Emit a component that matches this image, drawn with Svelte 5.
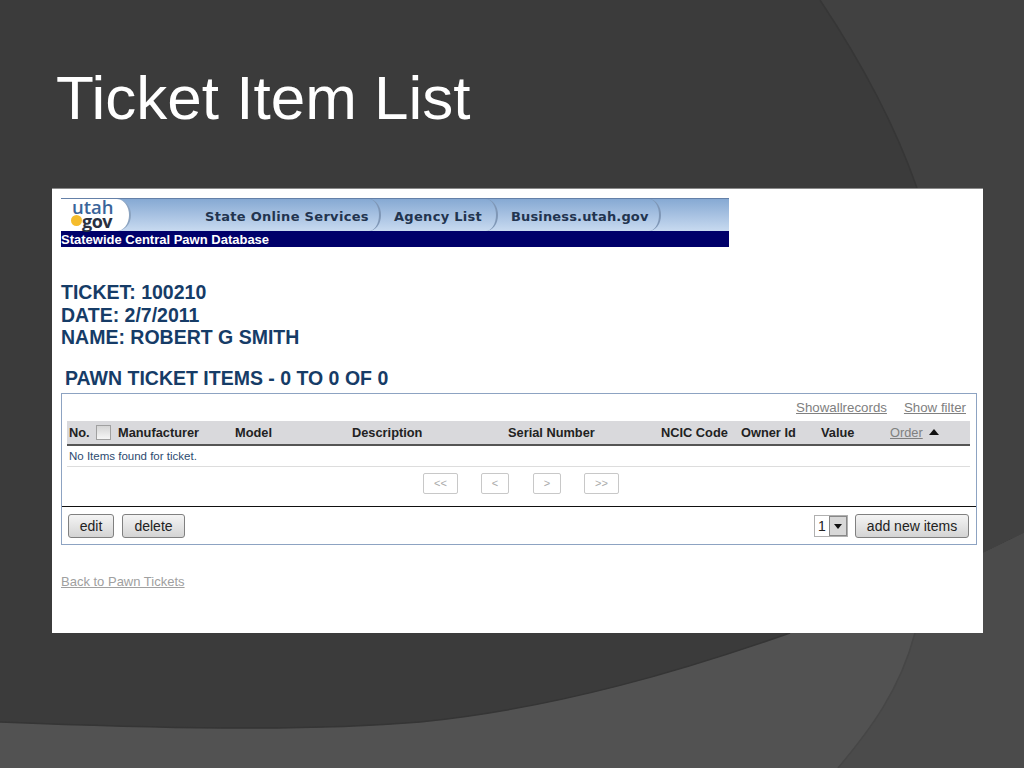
<script>
  const cols = [
    { label: 'Manufacturer', w: 117 },
    { label: 'Model', w: 117 },
    { label: 'Description', w: 156 },
    { label: 'Serial Number', w: 153 },
    { label: 'NCIC Code', w: 80 },
    { label: 'Owner Id', w: 80 },
    { label: 'Value', w: 69 }
  ];
  const pager = [
    { t: '<<', w: 35, gap: 23 },
    { t: '<', w: 28, gap: 24 },
    { t: '>', w: 28, gap: 23 },
    { t: '>>', w: 35, gap: 0 }
  ];
</script>

<div class="page">
  <svg class="bg" width="1024" height="768" viewBox="0 0 1024 768" aria-hidden="true">
    <rect width="1024" height="768" fill="#3b3b3b" />
    <path d="M820 0 C860 60 895 125 917 188 C940 260 965 400 983 553 L1024 533 L1024 0 Z" fill="#414141" />
    <path d="M820 0 C860 60 895 125 917 188" fill="none" stroke="#363636" stroke-width="1.5" />
    <path d="M0 722 C150 728 300 732 420 722 C560 708 690 668 790 633 L983 553 L1024 533 L1024 768 L0 768 Z" fill="#525252" />
    <path d="M915 633 C900 690 870 730 838 768 L1024 768 L1024 533 L983 553 Z" fill="#4b4b4b" />
    <path d="M915 633 C900 690 870 730 838 768" fill="none" stroke="#464646" stroke-width="1.5" />
    <path d="M0 722 C150 728 300 732 420 722 C560 708 690 668 790 633" fill="none" stroke="#353535" stroke-width="1.5" />
  </svg>

  <h1>Ticket Item List</h1>

  <main class="card">
    <div class="banner">
      <div class="nav">
        <div class="logo">
          <span class="dot"></span>
          <span class="utah">utah</span>
          <span class="gov">gov</span>
        </div>
        <div class="tab first">State Online Services</div>
        <div class="tab second">Agency List</div>
        <div class="tab third">Business.utah.gov</div>
      </div>
      <div class="strip">Statewide Central Pawn Database</div>
    </div>

    <div class="meta">
      <div>TICKET: 100210</div>
      <div>DATE: 2/7/2011</div>
      <div>NAME: ROBERT G SMITH</div>
    </div>

    <h2>PAWN TICKET ITEMS - 0 TO 0 OF 0</h2>

    <section class="panel">
      <div class="links">
        <a href="#top">Showallrecords</a>
        <a href="#top">Show filter</a>
      </div>
      <div class="head">
        <span class="no">No.</span>
        <span class="check"></span>
        {#each cols as c}
          <span class="col" style="width:{c.w}px">{c.label}</span>
        {/each}
        <a class="order" href="#top">Order</a>
        <span class="tri"></span>
      </div>
      <div class="empty">No Items found for ticket.</div>
      <div class="pager">
        {#each pager as p}
          <span class="pg" style="width:{p.w}px;margin-right:{p.gap}px">{p.t}</span>
        {/each}
      </div>
      <div class="actions">
        <button>edit</button>
        <button class="del">delete</button>
        <span class="grow"></span>
        <span class="select"><span class="val">1</span><span class="arrow"></span></span>
        <button class="add">add new items</button>
      </div>
    </section>

    <a class="back" href="#top">Back to Pawn Tickets</a>
  </main>
</div>

<style>
  :global(body) { margin: 0; background: #3b3b3b; }
  .page {
    position: relative;
    width: 1024px;
    height: 768px;
    overflow: hidden;
    font-family: "Liberation Sans", Arial, sans-serif;
  }
  .bg { position: absolute; inset: 0; }
  h1 {
    position: relative;
    margin: 0;
    height: 188px;
    box-sizing: border-box;
    padding: 62px 0 0 56px;
    font-size: 62px;
    line-height: 72px;
    font-weight: 400;
    color: #fff;
  }
  .card {
    position: relative;
    width: 931px;
    height: 445px;
    margin-left: 52px;
    box-sizing: border-box;
    padding: 9px 6px 0 9px;
    background: #fff;
    border-top: 1px solid #8a8a8a;
  }
  .banner { width: 668px; }
  .nav {
    display: flex;
    height: 33px;
    background: linear-gradient(#86a9d3, #c8daf0);
    border-top: 1px solid #6480a8;
    box-sizing: border-box;
  }
  .logo {
    position: relative;
    flex: none;
    width: 70px;
    background: #fff;
    border-right: 2px solid #8ba3c0;
    border-radius: 0 14px 14px 0 / 0 50% 50% 0;
    box-sizing: border-box;
  }
  .utah, .gov {
    position: absolute;
    font-family: "Open Sans", sans-serif;
    line-height: 14px;
  }
  .utah { left: 11px; top: 1px; font-size: 18.5px; font-weight: 600; color: #3a6499; }
  .gov { left: 21px; top: 15px; font-size: 18px; font-weight: 700; color: #2a3140; letter-spacing: -0.5px; }
  .dot {
    position: absolute;
    left: 10px;
    top: 16px;
    width: 11px;
    height: 11px;
    border-radius: 50%;
    background: #f5bc2c;
  }
  .tab {
    display: flex;
    flex: none;
    align-items: center;
    box-sizing: border-box;
    padding-top: 2px;
    font-family: "DejaVu Sans", sans-serif;
    font-weight: 700;
    font-size: 13px;
    letter-spacing: 0.3px;
    color: #22344f;
    border-right: 2px solid #7f97b6;
    border-radius: 0 12px 12px 0 / 0 50% 50% 0;
    white-space: nowrap;
  }
  .tab.first { width: 250px; padding-left: 74px; }
  .tab.second { width: 117px; padding-left: 13px; }
  .tab.third { width: 163px; padding-left: 13px; letter-spacing: 0.15px; }
  .strip {
    height: 16px;
    background: #00006a;
    color: #fff;
    font-size: 13px;
    font-weight: 700;
    line-height: 17px;
  }
  .meta {
    margin-top: 34px;
    font-size: 19.5px;
    line-height: 22.5px;
    font-weight: 700;
    color: #163c67;
  }
  h2 {
    margin: 18px 0 0 4px;
    font-size: 19.5px;
    line-height: 22px;
    font-weight: 700;
    color: #163c67;
  }
  .panel {
    width: 916px;
    height: 152px;
    margin-top: 4px;
    box-sizing: border-box;
    padding-top: 5px;
    border: 1px solid #8da3c2;
  }
  .links {
    display: flex;
    justify-content: flex-end;
    gap: 17px;
    height: 22px;
    padding-right: 10px;
    font-size: 13.3px;
    line-height: 17px;
  }
  a { color: #808080; }
  .head {
    display: flex;
    align-items: center;
    height: 25px;
    box-sizing: border-box;
    margin: 0 6px 0 5px;
    padding-left: 2px;
    background: #d9d9dc;
    border-bottom: 2px solid #555;
    font-size: 12.8px;
    font-weight: 700;
    color: #222;
  }
  .no { flex: none; width: 27px; }
  .check {
    flex: none;
    width: 13px;
    height: 13px;
    margin-right: 7px;
    border: 1px solid #a0a0a0;
    background: linear-gradient(#d4d4d4, #f6f6f6);
  }
  .col { flex: none; white-space: nowrap; }
  .order { flex: none; font-weight: 400; width: 39px; }
  .tri {
    width: 0;
    height: 0;
    border: 5px solid transparent;
    border-top: 0;
    border-bottom: 6px solid #111;
  }
  .empty {
    height: 21px;
    box-sizing: border-box;
    margin: 0 6px 0 5px;
    padding-left: 2px;
    border-bottom: 1px solid #ddd;
    font-size: 11.5px;
    line-height: 20px;
    color: #2d4a70;
  }
  .pager {
    display: flex;
    align-items: center;
    height: 40px;
    box-sizing: border-box;
    padding-left: 361px;
    padding-bottom: 5px;
    border-bottom: 1px solid #111;
  }
  .pg {
    height: 21px;
    box-sizing: border-box;
    border: 1px solid #c8c8c8;
    border-radius: 2px;
    text-align: center;
    font-size: 11px;
    line-height: 19px;
    color: #aaa;
  }
  .actions {
    display: flex;
    align-items: center;
    padding: 7px 7px 0 6px;
  }
  .grow { flex: 1; }
  button {
    height: 24px;
    padding: 0;
    width: 46px;
    margin-right: 8px;
    border: 1px solid #808080;
    border-radius: 3px;
    background: linear-gradient(#f4f4f4, #d4d4d4);
    font: 14px/20px "Liberation Sans", Arial, sans-serif;
    color: #222;
  }
  .del { width: 63px; margin-right: 0; }
  .add { width: 114px; margin-right: 0; }
  .select {
    display: flex;
    width: 34px;
    height: 22px;
    margin-right: 7px;
    box-sizing: border-box;
    border: 1px solid #b0b0b0;
    font-size: 14px;
    line-height: 20px;
    color: #222;
  }
  .val { width: 14px; text-align: center; }
  .arrow {
    position: relative;
    flex: 1;
    background: #d8d8d8;
    border: 1px solid #888;
  }
  .arrow::after {
    content: "";
    position: absolute;
    left: 4px;
    top: 7px;
    border: 4px solid transparent;
    border-top: 5px solid #111;
    border-bottom: 0;
  }
  .back {
    display: block;
    margin-top: 28px;
    font-size: 13px;
    line-height: 17px;
    color: #a0a0a0;
  }
</style>
